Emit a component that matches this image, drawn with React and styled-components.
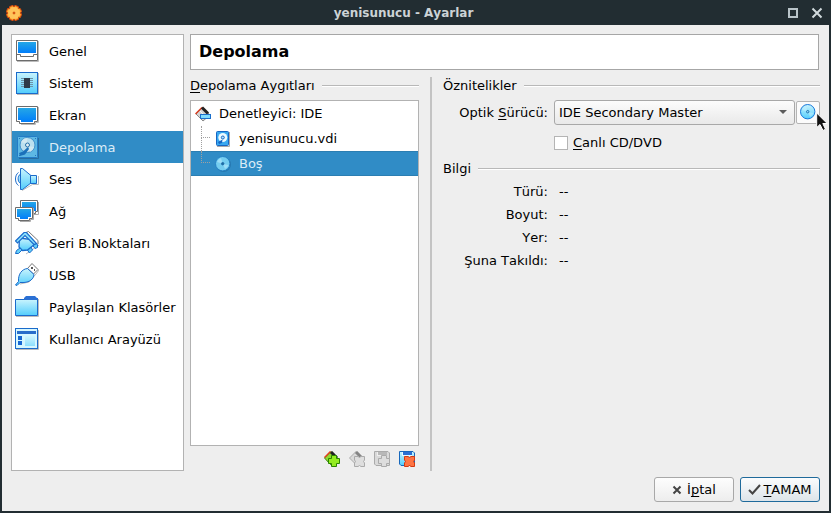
import React from "react";
import styled, { createGlobalStyle, css } from "styled-components";

const GlobalStyle = createGlobalStyle`
  *, *::before, *::after { box-sizing: border-box; }
  body { margin: 0; background: #222d32; }
  body, button, select, input {
    font-family: "DejaVu Sans", sans-serif;
    font-size: 13px;
    line-height: 16px;
    font-kerning: none;
    color: #000;
  }
`;

const Window = styled.div`
  display: flex;
  flex-direction: column;
  min-height: 100vh;
  padding: 0 2px 2px;
  background: #222d32;
`;

const TitleBar = styled.header`
  display: grid;
  grid-template-columns: 30px 1fr 54px;
  align-items: center;
  height: 25px;
  padding: 0 4px;
`;

const WindowTitle = styled.h1`
  margin: 0;
  text-align: center;
  font-size: 12px;
  font-weight: bold;
  color: #cdd3d6;
`;

const WindowControls = styled.div`
  display: flex;
  justify-content: flex-end;
  gap: 8px;
`;

const WindowButton = styled.button`
  display: flex;
  padding: 0;
  border: 0;
  background: none;
`;

const Dialog = styled.div`
  flex: 1;
  display: flex;
  flex-direction: column;
  gap: 6px;
  padding: 9px;
  background: #eeeeee;
`;

const Columns = styled.div`
  flex: 1;
  display: grid;
  grid-template-columns: 173px 1fr;
  gap: 6px;
`;

const CategoryList = styled.nav`
  border: 1px solid #b2b2b2;
  background: #fff;
`;

const Category = styled.a`
  display: flex;
  align-items: center;
  gap: 10px;
  height: 32px;
  padding: 0 3px;
  white-space: nowrap;
  text-decoration: none;
  color: ${(p) => (p.$active ? "#dcecf7" : "#000")};
  background: ${(p) => (p.$active ? "#308cc6" : "transparent")};
`;

const CategoryLabel = styled.span`
  padding-top: 2px;
`;

const Page = styled.main`
  display: flex;
  flex-direction: column;
  gap: 7px;
  min-width: 0;
`;

const PageTitle = styled.h2`
  height: 36px;
  margin: 0 1px 0 0;
  padding: 0 8px;
  border: 1px solid #a6a6a6;
  background: #fff;
  font-size: 16px;
  line-height: 34px;
`;

const Panels = styled.div`
  flex: 1;
  display: grid;
  grid-template-columns: 229px 2px 1fr;
  column-gap: 11px;
`;

const Splitter = styled.div`
  background: #c3c3c3;
`;

const Panel = styled.section`
  display: flex;
  flex-direction: column;
  min-width: 0;
`;

const GroupTitle = styled.h3`
  display: flex;
  align-items: center;
  gap: 7px;
  margin: 0;
  font-size: 13px;
  font-weight: normal;
  line-height: 17px;

  &::after {
    content: "";
    flex: 1;
    height: 2px;
    border-top: 1px solid #b8b8b8;
    background: #fff;
  }
`;

const Mnemonic = styled.u`
  text-decoration-thickness: 1px;
  text-underline-offset: 2px;
  text-decoration-skip-ink: none;
`;

const Tree = styled.ul`
  flex: 1;
  margin: 6px 0 0;
  padding: 0;
  border: 1px solid #b2b2b2;
  background: #fff;
  list-style: none;
`;

const TreeRow = styled.li`
  display: flex;
  align-items: center;
  gap: 8px;
  height: 25px;
  padding-left: 4px;
  color: ${(p) => (p.$active ? "#dcecf7" : "#000")};
  background: ${(p) => (p.$active ? "#308cc6" : "transparent")};
  ${(p) =>
    p.$active &&
    css`
      box-shadow: inset 0 1px #2b7eb2, inset 0 -1px #2b7eb2;
    `}
`;

const Branch = styled.span`
  align-self: stretch;
  display: grid;
  grid-template-rows: 12px 13px;
  width: 9px;
  margin: 0 -3px 0 6px;

  &::before {
    content: "";
    border-left: 1px dotted #a0a0a0;
    border-bottom: 1px dotted #a0a0a0;
  }

  &::after {
    content: "";
    border-left: ${(p) => (p.$last ? "0" : "1px dotted #a0a0a0")};
  }
`;

const TreeActions = styled.div`
  display: flex;
  justify-content: flex-end;
  gap: 9px;
  padding: 5px 4px 4px;
`;

const IconButton = styled.button`
  display: flex;
  padding: 0;
  border: 0;
  background: none;
`;

const Fields = styled.div`
  display: grid;
  grid-template-columns: 105px 1fr;
  align-items: center;
  column-gap: 6px;
  margin-top: 6px;
`;

const FieldLabel = styled.label`
  text-align: right;
  white-space: nowrap;
`;

const DriveControls = styled.div`
  display: flex;
  align-items: center;
  gap: 1px;
`;

const SelectBox = styled.div`
  flex: 1;
  display: grid;
  grid-template-columns: 1fr 16px;
  align-items: center;
  height: 25px;
  border: 1px solid #a8a8a8;
  border-radius: 3px;
  background: linear-gradient(#fcfcfc, #e9e9e9);

  svg {
    grid-area: 1 / 2;
    pointer-events: none;
  }
`;

const Select = styled.select`
  grid-area: 1 / 1 / 2 / 3;
  width: 100%;
  height: 23px;
  padding: 0 20px 0 4px;
  border: 0;
  background: transparent;
  appearance: none;
`;

const DiscButton = styled.button`
  position: relative;
  width: 24px;
  height: 23px;
  padding: 2px 3px;
  border: 1px solid #b4b4b4;
  border-radius: 2px;
  background: #fbfbfb;
`;

const Pointer = styled.svg`
  position: absolute;
  left: 19px;
  top: 10px;
`;

const CheckLabel = styled.label`
  grid-column: 2;
  display: flex;
  align-items: center;
  gap: 5px;
  margin: 10px 0 9px;
`;

const CheckBox = styled.input`
  width: 14px;
  height: 14px;
  margin: 0;
  border: 1px solid #b4b4b4;
  background: #fff;
  appearance: none;
`;

const Details = styled.dl`
  display: grid;
  grid-template-columns: 105px 1fr;
  column-gap: 11px;
  row-gap: 7px;
  margin: 7px 0 0;
`;

const Term = styled.dt`
  text-align: right;
  white-space: nowrap;
`;

const Value = styled.dd`
  margin: 0;
`;

const Footer = styled.footer`
  display: flex;
  justify-content: flex-end;
  gap: 6px;
`;

const DialogButton = styled.button`
  display: flex;
  align-items: center;
  justify-content: center;
  gap: ${(p) => (p.$primary ? "2px" : "5px")};
  width: 80px;
  height: 25px;
  padding: 0;
  white-space: nowrap;
  border: 1px solid ${(p) => (p.$primary ? "#1f6a9b" : "#a8a8a8")};
  border-radius: 3px;
  background: ${(p) =>
    p.$primary
      ? "linear-gradient(#fbfcfd, #dde4e9)"
      : "linear-gradient(#fdfdfd, #ededed)"};
`;

function Gradients({ id }) {
  return (
    <defs>
      <linearGradient id={id + "-pale"} x1="0" y1="0" x2="0" y2="1">
        <stop offset="0" stopColor="#c9f4fd" />
        <stop offset="1" stopColor="#52cdfc" />
      </linearGradient>
      <linearGradient id={id + "-screen"} x1="0" y1="0" x2="0" y2="1">
        <stop offset="0" stopColor="#25a7e6" />
        <stop offset="1" stopColor="#007dfa" />
      </linearGradient>
    </defs>
  );
}

function CategoryIcon({ name }) {
  const pale = `url(#${name}-pale)`;
  const screen = `url(#${name}-screen)`;
  const drawings = {
    general: (
      <>
        <path d="M2 22.5H23.5V2" fill="none" stroke="#bbb" />
        <path d="M1.5 1.5H22.5V21.5H1.5Z" fill="#fff" stroke="#6c6c6c" />
        <rect x="3" y="3" width="18" height="11" fill={screen} />
        <path d="M2 15.5H5.5V17.5H18.5V15.5H22" fill="none" stroke="#6c6c6c" />
      </>
    ),
    system: (
      <>
        <path d="M2 23.5H23.5V2" fill="none" stroke="#bbb" />
        <rect x="1.5" y="1.5" width="21" height="21" fill={pale} stroke="#1a6bcb" />
        <path d="M6 7.5H18M6 9.5H18M6 11.5H18M6 13.5H18M6 15.5H18" stroke="#6d93a8" />
        <rect x="9" y="7" width="6" height="10" fill="#2f3a48" />
      </>
    ),
    display: (
      <>
        <path d="M6 21.5H20.5V19.5H23.5V4" fill="none" stroke="#bbb" />
        <path d="M1.5 3.5H22.5V18.5H19.5V20.5H4.5V18.5H1.5Z" fill="#fff" stroke="#6c6c6c" />
        <path d="M3 5H21V17H18V19H6V17H3Z" fill={screen} />
      </>
    ),
    storage: (
      <>
        <path d="M4 23.5H23.5V3" fill="none" stroke="#276da0" />
        <rect x="2.5" y="1.5" width="20" height="21" rx="1" fill="#5db8e4" stroke="#247cc7" />
        <path d="M4 3h1v1H4zM20 3h1v1h-1zM4 20h1v1H4zM20 20h1v1h-1z" fill="#2874ba" />
        <circle cx="12.5" cy="10" r="7.5" fill="#bce0ef" stroke="#408fc9" />
        <path d="M6 7a7 7 0 0 1 6-4v6zM19 12a7 7 0 0 1-4 5l-2-6z" fill="#dcecf2" opacity=".7" />
        <circle cx="12.5" cy="10" r="2" fill="#e3eff3" stroke="#2671aa" />
        <path d="M4 18L8 16.5 13 12l1 2-4 5.5L5 21Z" fill="#1b71ba" />
      </>
    ),
    audio: (
      <>
        <path d="M7 23.5L17.5 17.5H23.5V9" fill="none" stroke="#bbb" />
        <path d="M5.5 1.5L7.5 1.5 16.5 9V15.5L7.5 22.5H5.5Z" fill={pale} stroke="#1a6bcb" />
        <path d="M15.5 8.5H21.5V16.5H15.5Z" fill={pale} stroke="#1a6bcb" />
        <path d="M5 7.5C2.5 9 2.5 14.5 5 16" fill="#9ce2ff" stroke="#1a6bcb" />
        <path d="M3.5 5.5C-.5 8-.5 16 3.5 18.5" fill="none" stroke="#1a6bcb" />
      </>
    ),
    network: (
      <>
        <path d="M19 15.5H23.5V3" fill="none" stroke="#aaa" />
        <path d="M5.5 1.5H22.5V12.5H20.5V14.5H8.5V12.5H5.5Z" fill="#fff" stroke="#6c6c6c" />
        <path d="M7 3H21V12H7Z" fill={screen} />
        <path d="M5 22.5H15.5V20.5H18.5V9" fill="none" stroke="#aaa" />
        <path d="M.5 8.5H17.5V19.5H14.5V21.5H3.5V19.5H.5Z" fill="#fff" stroke="#6c6c6c" />
        <path d="M2 10H16V18H13V20H5V18H2Z" fill={screen} />
      </>
    ),
    serial: (
      <>
        <path d="M11 23L24 14" stroke="#bbb" />
        <path d="M11 1.5L13.5.5 23 9.5V13" fill="#fff" stroke="#777" />
        <path d="M12 18.5L15.5 15 17.5 19 14.5 22ZM17.5 14L20 12 22.5 13.5V16.5L20 17.5Z" fill="#63cff7" stroke="#1a6bcb" />
        <path d="M4.5 7L16.5 8.5 20 13 12.5 19 7.5 19.5 4 16Z" fill={pale} stroke="#1a6bcb" strokeWidth="1.3" />
        <path d="M.5 10L9 1.5H11.5L21.5 12.5 19 13.5 10 4.5 2.5 12Z" fill="#8be0fc" stroke="#1a6bcb" strokeWidth="1.2" />
        <path d="M.5 22.5L1.5 19.5 5 17 7 19 3.5 22.5Z" fill="#63cff7" stroke="#1a6bcb" />
      </>
    ),
    usb: (
      <>
        <path d="M5 21L14 19 21 11 24 7" fill="none" stroke="#bbb" />
        <path d="M12.5 5.5L17 .5 23 6.5 18.5 11Z" fill="#fff" stroke="#777" />
        <path d="M16 4h2v2h-2zM19 6h1v2h-1z" fill="#555" />
        <path d="M12.5 5.5L19 11.5C18.5 16 15 19 9 19.5L5 19.5 2 22.5.5 22 3.5 18.5C3 11 7 6 12.5 5.5Z" fill={pale} stroke="#1a6bcb" />
      </>
    ),
    folder: (
      <>
        <path d="M1 21.5H23.5V4" fill="none" stroke="#bbb" />
        <path d="M.5 4.5H22.5V20.5H.5Z" fill={pale} stroke="#1a6bcb" />
        <path d="M9 5V3L11 1H20L22 3H23V5Z" fill="#2b70d4" />
      </>
    ),
    interface: (
      <>
        <path d="M1 22.5H23.5V3" fill="none" stroke="#bbb" />
        <rect x=".5" y="1.5" width="22" height="20" fill="#d6f7ff" stroke="#1a6bcb" />
        <path d="M2 4H21V7H2Z" fill="#286dca" />
        <path d="M3 9H7V13H3ZM3 14H7V18H3Z" fill="#1767d2" />
        <path d="M10 9H20V19H10Z" fill={pale} opacity=".55" />
      </>
    ),
  };
  return (
    <svg width="24" height="24" viewBox="0 0 24 24" aria-hidden="true">
      <Gradients id={name} />
      {drawings[name]}
    </svg>
  );
}

function ControllerIcon() {
  return (
    <svg width="16" height="16" viewBox="0 0 16 16" aria-hidden="true">
      <path d="M1 8L7.5 1.5 15 9 8 15Z" fill="#d3d3d3" stroke="#888" />
      <path d="M.5 8L7 1.5" stroke="#d83a1c" strokeWidth="1.5" />
      <path d="M7 1.5L13 7.5" stroke="#222" strokeWidth="3" />
      <path d="M5 5L8 8" stroke="#f6f6f6" />
      <rect x="5.5" y="8.5" width="10" height="4" fill="#7fdcff" stroke="#196ecb" />
    </svg>
  );
}

function DiskIcon() {
  return (
    <svg width="16" height="16" viewBox="0 0 16 16" aria-hidden="true">
      <path d="M2 15.5H14.5V1" stroke="#aaa" fill="none" />
      <rect x="1.5" y=".5" width="12" height="14" rx="1" fill="#38a8f0" stroke="#1766c3" />
      <circle cx="7.8" cy="6.5" r="4.5" fill="#ecfaff" />
      <circle cx="7.8" cy="6.5" r="1.5" fill="#b9e5fa" stroke="#1766c3" />
      <path d="M3 11L7.5 8.5 7 12 4 13Z" fill="#1766c3" />
    </svg>
  );
}

function DiscIcon({ flat }) {
  return (
    <svg width="16" height="16" viewBox="0 0 16 16" aria-hidden="true">
      <Gradients id={flat ? "disc-flat" : "disc"} />
      {flat && <circle cx="8.5" cy="8.5" r="7.5" fill="#2878ae" />}
      <circle
        cx="7.7"
        cy="7.7"
        r="7.2"
        fill={flat ? "#74cdf0" : "url(#disc-pale)"}
        stroke={flat ? "#2580c4" : "#1878db"}
      />
      <path d="M2 6A6 6 0 0 1 6 2L7.7 7.7ZM10 13A6 6 0 0 0 13.5 9L8 8Z" fill="#c3efff" opacity=".5" />
      <circle cx="7.7" cy="7.7" r="1.2" fill={flat ? "#236b9d" : "#9cdef9"} stroke="#1d6fae" />
    </svg>
  );
}

const PLUS = "M7.5 4.5H12.5V7.5H15.5V12.5H12.5V15.5H7.5V12.5H4.5V7.5H7.5Z";
const CROSS = "M5.5 5.5H9L10.5 6.5 12 5.5H15.5V9L14.5 10.5 15.5 12V15.5H12L10.5 14.5 9 15.5H5.5V12L6.5 10.5 5.5 9Z";

function AddControllerIcon() {
  return (
    <svg width="16" height="16" viewBox="0 0 16 16" aria-hidden="true">
      <path d="M.5 7L7 .5 15 9 9 14.5 6 13Z" fill="#91d832" stroke="#3c8710" />
      <path d="M.5 6.5L6.5 .5" stroke="#e4401e" strokeWidth="1.5" />
      <path d="M7 1L13 7" stroke="#222" strokeWidth="3" />
      <path d={PLUS} fill="#94ed20" stroke="#298400" />
    </svg>
  );
}

function RemoveControllerIcon() {
  return (
    <svg width="16" height="16" viewBox="0 0 16 16" aria-hidden="true">
      <path d="M.5 7L7 .5 14.5 8 8 14.5Z" fill="#dadada" stroke="#aaa" />
      <path d="M7 1L12 6" stroke="#858585" strokeWidth="3" />
      <path d={CROSS} fill="#dedede" stroke="#aaa" />
    </svg>
  );
}

function AttachmentIcon({ remove }) {
  return (
    <svg width="16" height="16" viewBox="0 0 16 16" aria-hidden="true">
      <Gradients id={remove ? "detach" : "attach"} />
      <path
        d="M.5 .5H14L15.5 2V14.5H2L.5 13Z"
        fill={remove ? "url(#detach-pale)" : "#d9d9d9"}
        stroke={remove ? "#1767bc" : "#aaa"}
      />
      <path d="M3 1H13V5H3Z" fill={remove ? "#e8f9ff" : "#eee"} />
      <path d="M4 1H13V4H4Z" fill={remove ? "#2b6fd3" : "#b8b8b8"} />
      <path
        d={remove ? CROSS : PLUS}
        fill={remove ? "#ff7443" : "#ddd"}
        stroke={remove ? "#d33a13" : "#aaa"}
      />
    </svg>
  );
}

function GearIcon() {
  const teeth = [22, 67, 112, 157, 202, 247, 292, 337];
  return (
    <svg width="16" height="16" viewBox="0 0 16 16" aria-hidden="true">
      {teeth.map((a) => (
        <rect key={a} x="6" y=".5" width="4" height="6" rx="1" fill="#ffb534" stroke="#de4d0e" transform={`rotate(${a} 8 8)`} />
      ))}
      <circle cx="8" cy="8" r="6" fill="#ffc45a" />
      <circle cx="8" cy="8" r="1" fill="#8f2b08" stroke="#e65d13" />
    </svg>
  );
}

const categories = [
  ["general", "Genel"],
  ["system", "Sistem"],
  ["display", "Ekran"],
  ["storage", "Depolama"],
  ["audio", "Ses"],
  ["network", "Ağ"],
  ["serial", "Seri B.Noktaları"],
  ["usb", "USB"],
  ["folder", "Paylaşılan Klasörler"],
  ["interface", "Kullanıcı Arayüzü"],
];

const details = ["Türü:", "Boyut:", "Yer:", "Şuna Takıldı:"];

export default function App() {
  return (
    <Window>
      <GlobalStyle />
      <TitleBar>
        <GearIcon />
        <WindowTitle>yenisunucu - Ayarlar</WindowTitle>
        <WindowControls>
          <WindowButton aria-label="Ekranı Kapla">
            <svg width="16" height="16" viewBox="0 0 16 16">
              <rect x="4" y="4" width="8" height="8" fill="none" stroke="#b9c4c9" strokeWidth="2" />
            </svg>
          </WindowButton>
          <WindowButton aria-label="Kapat">
            <svg width="16" height="16" viewBox="0 0 16 16">
              <path d="M3.5 3.5L12.5 12.5M12.5 3.5L3.5 12.5" stroke="#d1dadd" strokeWidth="2" />
            </svg>
          </WindowButton>
        </WindowControls>
      </TitleBar>

      <Dialog>
        <Columns>
          <CategoryList>
            {categories.map(([name, label]) => (
              <Category
                key={name}
                href={`#${name}`}
                $active={name === "storage"}
                aria-current={name === "storage" ? "page" : undefined}
              >
                <CategoryIcon name={name} />
                <CategoryLabel>{label}</CategoryLabel>
              </Category>
            ))}
          </CategoryList>

          <Page>
            <PageTitle>Depolama</PageTitle>
            <Panels>
              <Panel>
                <GroupTitle>
                  <span><Mnemonic>D</Mnemonic>epolama Aygıtları</span>
                </GroupTitle>
                <Tree>
                  <TreeRow>
                    <ControllerIcon />
                    Denetleyici: IDE
                  </TreeRow>
                  <TreeRow>
                    <Branch />
                    <DiskIcon />
                    yenisunucu.vdi
                  </TreeRow>
                  <TreeRow $active>
                    <Branch $last />
                    <DiscIcon flat />
                    Boş
                  </TreeRow>
                </Tree>
                <TreeActions>
                  <IconButton aria-label="Denetleyici ekle"><AddControllerIcon /></IconButton>
                  <IconButton aria-label="Denetleyiciyi kaldır" disabled><RemoveControllerIcon /></IconButton>
                  <IconButton aria-label="Ek ekle" disabled><AttachmentIcon /></IconButton>
                  <IconButton aria-label="Eki kaldır"><AttachmentIcon remove /></IconButton>
                </TreeActions>
              </Panel>

              <Splitter />

              <Panel>
                <GroupTitle>Öznitelikler</GroupTitle>
                <Fields>
                  <FieldLabel htmlFor="drive">
                    Optik <Mnemonic>S</Mnemonic>ürücü:
                  </FieldLabel>
                  <DriveControls>
                    <SelectBox>
                      <Select id="drive" defaultValue="master">
                        <option value="master">IDE Secondary Master</option>
                      </Select>
                      <svg width="9" height="5" viewBox="0 0 9 5" aria-hidden="true">
                        <path d="M1 0H9L5 4Z" fill="#5c5c5c" />
                      </svg>
                    </SelectBox>
                    <DiscButton aria-label="Sanal optik disk seç">
                      <DiscIcon />
                      <Pointer width="12" height="20" viewBox="0 0 12 20" aria-hidden="true">
                        <path
                          d="M.7 1V15.5L4 12.5 7 18.5 9.5 17.2 6.8 11.5H11.2Z"
                          fill="#111"
                          stroke="#fff"
                        />
                      </Pointer>
                    </DiscButton>
                  </DriveControls>
                  <CheckLabel>
                    <CheckBox type="checkbox" />
                    <span><Mnemonic>C</Mnemonic>anlı CD/DVD</span>
                  </CheckLabel>
                </Fields>

                <GroupTitle>Bilgi</GroupTitle>
                <Details>
                  {details.map((label) => (
                    <React.Fragment key={label}>
                      <Term>{label}</Term>
                      <Value>--</Value>
                    </React.Fragment>
                  ))}
                </Details>
              </Panel>
            </Panels>
          </Page>
        </Columns>

        <Footer>
          <DialogButton>
            <svg width="10" height="10" viewBox="0 0 10 10" aria-hidden="true">
              <path d="M1.5 1.5L8.5 8.5M8.5 1.5L1.5 8.5" stroke="#444" strokeWidth="2" />
            </svg>
            <span>İ<Mnemonic>p</Mnemonic>tal</span>
          </DialogButton>
          <DialogButton $primary>
            <svg width="13" height="12" viewBox="0 0 13 12" aria-hidden="true">
              <path d="M1 6L4.5 9.5 12 1" fill="none" stroke="#444" strokeWidth="2" />
            </svg>
            <span><Mnemonic>T</Mnemonic>AMAM</span>
          </DialogButton>
        </Footer>
      </Dialog>
    </Window>
  );
}
